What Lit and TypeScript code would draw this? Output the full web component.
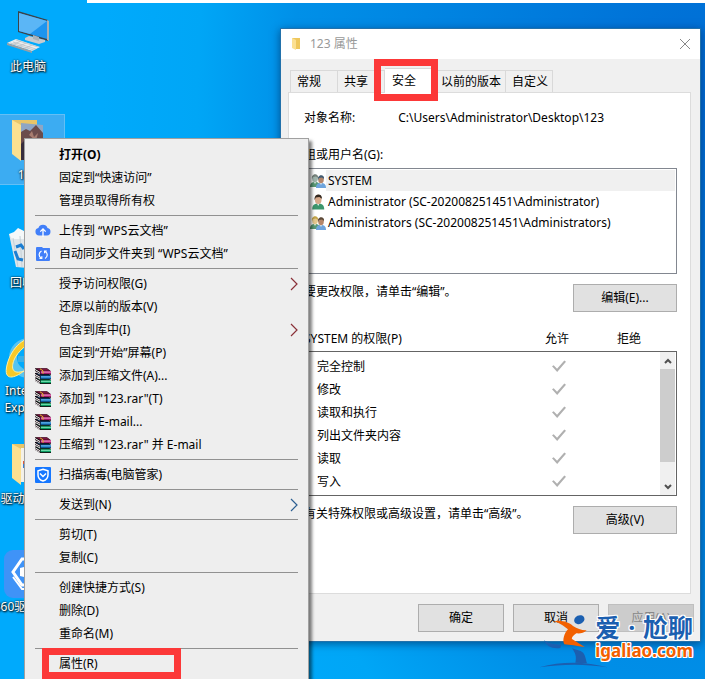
import { LitElement, html, svg, css, nothing, TemplateResult } from "lit";
import { customElement } from "lit/decorators.js";
import { classMap } from "lit/directives/class-map.js";

const pcIcon = html`<svg viewBox="0 0 48 48" width="48" height="48" aria-hidden="true">
  <path d="M14 1l30 9v21L14 22z" fill="#3c4348"/><path d="M43 10l2 1v20l-2-1z" fill="#a9b0b5"/>
  <path d="M15 3l28 8v18L15 21z" fill="#1e95ef"/><path d="M15 3l28 8L26 24l-11-3z" fill="#5bb6f6"/>
  <path d="M21 28l4-2 16 4v2l-6 2-14-4z" fill="#c6cbd0"/><path d="M29 25l6 2v4l-6-2z" fill="#aab2b9"/>
  <path d="M3 33l9-4 24 8-8 4z" fill="#e9ecee"/><path d="M3 33l25 8v2L3 35z" fill="#989fa5"/>
  <path d="M6 33l24 7M9 32l23 7M12 30l22 7M8 35l9-4M14 37l8-4M20 39l8-4" stroke="#b4babf" stroke-width=".7" fill="none"/>
</svg>`;

const folderIcon = (photo: boolean) => html`<svg viewBox="0 0 48 48" width="48" height="48" aria-hidden="true">
  <path d="M8 2h25v32l-16 4z" fill="#e9c568"/>
  ${photo
    ? svg`<path d="M17 5l22 2v35H17z" fill="#8fa6c4"/><path d="M17 14l5-3 4 2 6-6 7 8v27H17z" fill="#6b4c4c"/><path d="M17 26l6-6 5 4 4-5 7 7v16H17z" fill="#372d3d"/><path d="M25 17l3-4 2 6 4-4-2 8z" fill="#a87d70"/>`
    : svg`<path d="M17 6h20v34H17z" fill="#f4f1e9"/><path d="M19 20h12v6H19z" fill="#3a7fd0"/><path d="M19 19h5v3h-5z" fill="#dc5a3b"/>`}
  <path d="M8 2l9 5v36l-9-7z" fill="#fbe090"/>
</svg>`;

const binIcon = html`<svg viewBox="0 0 48 48" width="48" height="48" aria-hidden="true">
  <path d="M5 8h37l-6 35-24-2z" fill="#dfe6ea"/><path d="M5 8l5-2 4-4 6 3 7-2 8 1 7 5-5 4H8z" fill="#f5f8f9"/>
  <path d="M9 12l5 29M16 10l2 31" stroke="#c4d0d7" fill="none"/>
  <path d="M12 21l5-2 3 4M11 25l3 8 5 1M23 20l7-2 4 7M23 35h8l3-6" stroke="#1c7ed2" stroke-width="3" fill="none"/>
</svg>`;

const ieIcon = html`<svg viewBox="0 0 48 48" width="48" height="48" aria-hidden="true">
  <circle cx="25" cy="24" r="16" fill="none" stroke="#55c4f1" stroke-width="8"/><path d="M14 22h27v6H14z" fill="#35b1ea"/>
  <path d="M37 4C21 0 7 14 3 31s8 13 17 6C8 41 7 34 10 26S25 7 37 4z" fill="#f7c928" stroke="#fff0a0" stroke-width="1"/>
</svg>`;

const driverIcon = html`<svg viewBox="0 0 48 48" width="48" height="48" aria-hidden="true">
  <rect width="48" height="48" rx="9" fill="#3f93f7"/>
  <path d="M18 9h12l9 13-9 13H18L9 22z" fill="none" stroke="#fff" stroke-width="3"/>
  <path d="M9 27l9 12h12" fill="none" stroke="#fff" stroke-width="2"/>
  <path d="M24 13l4 4 4 1v8l-4 1-4 4-4-4-4-1v-8l4-1z" fill="#fff"/><circle cx="24" cy="22" r="3" fill="#3f93f7"/>
</svg>`;

const cloudIcon = html`<svg viewBox="0 0 16 16" width="16" height="16" aria-hidden="true">
  <path d="M4 12.500a3.800 3.800 0 01-.6-7.500A4.800 4.800 0 0112.500 5 3.800 3.800 0 0112 12.500z" fill="#417ff9"/>
  <path d="M8 14V6M5.300 8.600L8 5.900l2.700 2.700" fill="none" stroke="#fff" stroke-width="1.300"/>
</svg>`;

const syncIcon = html`<svg viewBox="0 0 16 16" width="16" height="16" aria-hidden="true">
  <path d="M2 1h5l1 1h6.500a1 1 0 01.5 1v11a1 1 0 01-1 1H2a1 1 0 01-1-1V2a1 1 0 011-1z" fill="#417ff9"/>
  <path d="M6.500 5a4 4 0 00-.5 7M10 12.500a4 4 0 00.3-7M4.500 12.500h2.300v-2.300M11.800 5H9.600v2.300" fill="none" stroke="#fff" stroke-width="1.200"/>
</svg>`;

const book = (y: number, top: string, cover: string, light: string) => svg`<g transform="translate(0 ${y})">
  <path d="M0 0h12l4 3v3.500H5L0 3.500z" fill="#14060c"/><path d="M1 .4h10.800l3.200 2.200H5z" fill="${top}"/>
  <path d="M5.500 2.800H16v3H5.500z" fill="${cover}"/><path d="M6 3.900h10" stroke="${light}" stroke-width="1"/>
  <path d="M0 .9l5 2.900v1L0 1.900zM0 2.700l5 2.900v.8L0 3.500z" fill="#fff"/>
</g>`;
const rarIcon = html`<svg viewBox="0 0 16 16" width="16" height="16" aria-hidden="true">
  ${book(9.400, "#055a3a", "#0a9a60", "#7fe8b8")}${book(5, "#06406f", "#0a6ab4", "#7cc8f8")}${book(0.200, "#7d1740", "#a01868", "#f6a0d0")}
  <path d="M5 .8l3 2v3" fill="none" stroke="#e0b428" stroke-width="1"/>
</svg>`;

const shieldIcon = html`<svg viewBox="0 0 16 16" width="16" height="16" aria-hidden="true">
  <rect width="16" height="16" rx="1" fill="#1677ff"/>
  <path d="M8 2.200l5 1.500v4C13 11 11 13 8 14 5 13 3 11 3 7.700v-4z" fill="none" stroke="#fff" stroke-width="1.500"/>
  <path d="M5 6.500l3 3 3-3" fill="none" stroke="#fff" stroke-width="1.500"/>
</svg>`;

const person = (x: number, y: number, skin: string, hair: string, coat: string) => svg`<g transform="translate(${x} ${y})">
  <path d="M0 13c0-4 2-5 5-5s5 1 5 5z" fill="${coat}"/><path d="M4 8l1 2 1-2z" fill="#eef4f4"/>
  <ellipse cx="5" cy="4.500" rx="2.800" ry="3.800" fill="${skin}"/><path d="M2 5c-1-6 7-6 6-1L6 2.500 3 3z" fill="${hair}"/>
</g>`;
const userIcon = html`<svg viewBox="0 0 16 16" width="16" height="16" aria-hidden="true">
  <g transform="translate(1 0) scale(1.200)">${person(1, 0, "#d7a98b", "#33281f", "#3c966d")}</g></svg>`;
const groupIcon = (hair: string, skin: string, back: string) => html`<svg viewBox="0 0 16 16" width="16" height="16" aria-hidden="true">
  ${person(0, 1, skin, hair, "#5a9a76")}${person(6, 2, "#b4866a", back, "#6ea4dc")}</svg>`;

const chevron = html`<svg viewBox="0 0 8 14" width="8" height="14" aria-hidden="true">
  <path d="M1 1l6 6-6 6" fill="none" stroke="currentColor" stroke-width="1.200"/></svg>`;

interface Entry { text: string; icon?: TemplateResult; sub?: "red" | "blue"; bold?: boolean; marked?: boolean }

const menuGroups: Entry[][] = [
  [{ text: "打开(O)", bold: true }, { text: "固定到“快速访问”" }, { text: "管理员取得所有权" }],
  [{ text: "上传到 “WPS云文档”", icon: cloudIcon }, { text: "自动同步文件夹到 “WPS云文档”", icon: syncIcon }],
  [
    { text: "授予访问权限(G)", sub: "red" }, { text: "还原以前的版本(V)" }, { text: "包含到库中(I)", sub: "red" },
    { text: "固定到“开始”屏幕(P)" }, { text: "添加到压缩文件(A)...", icon: rarIcon },
    { text: '添加到 "123.rar"(T)', icon: rarIcon }, { text: "压缩并 E-mail...", icon: rarIcon },
    { text: '压缩到 "123.rar" 并 E-mail', icon: rarIcon },
  ],
  [{ text: "扫描病毒(电脑管家)", icon: shieldIcon }],
  [{ text: "发送到(N)", sub: "blue" }],
  [{ text: "剪切(T)" }, { text: "复制(C)" }],
  [{ text: "创建快捷方式(S)" }, { text: "删除(D)" }, { text: "重命名(M)" }],
  [{ text: "属性(R)", marked: true }],
];

@customElement("context-menu")
export class ContextMenu extends LitElement {
  static styles = css`
    :host { display: block; box-sizing: border-box; padding: 4px 10px; border: 1px solid #a0a0a0; background: #eee; box-shadow: 3px 3px 3px rgba(0, 0, 0, .5); }
    ul { list-style: none; margin: 0; padding: 0; }
    .group + .group { border-top: 1px solid #919191; margin-top: 3px; padding-top: 3px; }
    .entry { position: relative; display: grid; grid-template-columns: 16px 1fr 8px; column-gap: 8px; align-items: center; width: 100%; height: 23px; padding: 0; border: 0; background: none; color: #000; font: inherit; line-height: 23px; text-align: left; white-space: nowrap; }
    .entry svg { display: block; }
    .bold { font-weight: 700; }
    .red { color: #8a3038; }
    .blue { color: #2c5f92; }
    .marked::after { content: ""; position: absolute; inset: -4px 117px -4px 7px; border: 7px solid #fc3838; }
  `;
  render() {
    return html`<ul role="menu">${menuGroups.map((g) => html`<li class="group" role="none"><ul role="none">${g.map((e) => html`
      <li role="none"><button role="menuitem" class=${classMap({ entry: true, bold: !!e.bold, marked: !!e.marked })}>
        <span>${e.icon ?? nothing}</span><span>${e.text}</span>${e.sub ? html`<span class=${e.sub}>${chevron}</span>` : nothing}
      </button></li>`)}</ul></li>`)}</ul>`;
  }
}

@customElement("properties-dialog")
export class PropertiesDialog extends LitElement {
  static styles = css`
    :host { display: block; border: 1px solid #2271ab; background: #f0f0f0; box-shadow: 0 2px 8px rgba(0, 20, 60, .5); line-height: 16px; }
    .title { display: flex; align-items: center; gap: 8px; height: 30px; padding: 0 9px; background: #fff; color: #999; }
    .title h1 { flex: 1; margin: 0; font: inherit; }
    .title svg { display: block; }
    .close { padding: 0; border: 0; background: none; color: #888; }
    .tabs { display: flex; align-items: flex-end; height: 24px; margin: 9px 9px 0 9px; }
    .tab { position: relative; box-sizing: border-box; width: 47px; height: 22px; padding: 0 0 0 6px; border: 1px solid #d9d9d9; border-width: 1px 1px 0 0; background: #f0f0f0; color: #000; font: inherit; text-align: left; white-space: nowrap; }
    .tab:first-child { width: 48px; border-left-width: 1px; }
    .tab.wide { width: 71px; }
    .tab.active { width: 50px; height: 25px; margin-bottom: -1px; padding-left: 7px; background: #fff; z-index: 1; }
    .tab.active::after { content: ""; position: absolute; inset: -10px -4px -8px -11px; border: 7px solid #fc3838; }
    .panel { margin: 0 9px 0 7px; padding: 17px 13px 59px 15px; border: 1px solid #dcdcdc; background: #fff; }
    .name { display: flex; gap: 43px; }
    .caption { margin: 21px 0 5px; }
    .users { box-sizing: border-box; height: 106px; margin: 0; padding: 1px; border: 1px solid #828790; list-style: none; }
    .user { display: flex; align-items: center; height: 21px; padding-left: 4px; }
    .user svg { display: block; }
    .user span { flex: 1; padding-left: 2px; line-height: 21px; white-space: nowrap; }
    .user.selected span { background: #f0f0f0; }
    .action { display: flex; justify-content: space-between; align-items: flex-start; margin-top: 10px; }
    .action p { margin: 0; }
    .btn { box-sizing: border-box; width: 86px; height: 28px; padding: 0; border: 1px solid #adadad; background: #e1e1e1; color: #000; font: inherit; }
    .btn.wide { width: 104px; }
    .btn:disabled { background: #ccc; border-color: #bfbfbf; color: #888; }
    .rights { position: relative; margin-top: 19px; }
    table, thead { display: block; }
    tr { display: grid; grid-template-columns: 1fr 72px 72px; }
    th, td { padding: 0; font-weight: 400; text-align: center; }
    th:first-child, td:first-child { text-align: left; }
    thead tr { padding-right: 12px; }
    tbody { box-sizing: border-box; display: block; height: 145px; margin-top: 4px; padding: 3px 12px 0; border: 1px solid #646464; }
    tbody tr { height: 23px; line-height: 23px; }
    .check { appearance: none; display: block; width: 14px; height: 12px; margin: 5px 0 0 32px; background: #b0b0b0; clip-path: polygon(0 52%, 12% 44%, 36% 72%, 88% 4%, 100% 14%, 37% 100%); }
    .scroll { position: absolute; right: 2px; bottom: 1px; display: flex; flex-direction: column; width: 15px; height: 143px; background: #f0f0f0; }
    .scroll button { display: grid; place-items: center; height: 17px; padding: 0; border: 0; background: none; color: #505050; }
    .thumb { height: 93px; background: #cdcdcd; }
    .scroll .down { margin-top: auto; }
    footer { display: flex; justify-content: flex-end; gap: 9px; padding: 10px 6px 9px; }
  `;
  render() {
    const users = [
      { name: "SYSTEM", icon: groupIcon("#77827c", "#a0b5ac", "#415c73") },
      { name: "Administrator (SC-202008251451\\Administrator)", icon: userIcon },
      { name: "Administrators (SC-202008251451\\Administrators)", icon: groupIcon("#c3a549", "#e5c88d", "#5b4939") },
    ];
    const rights = ["完全控制", "修改", "读取和执行", "列出文件夹内容", "读取", "写入"];
    return html`
      <header class="title">
        <svg viewBox="0 0 12 14" width="12" height="14" aria-hidden="true"><path d="M2 1h8v11H5z" fill="#eec75c"/><path d="M2 1l4 2v10l-4-2z" fill="#fbe092"/></svg>
        <h1>123 属性</h1>
        <button class="close" aria-label="关闭"><svg viewBox="0 0 12 12" width="12" height="12"><path d="M1 1l10 10M11 1L1 11" stroke="currentColor" fill="none"/></svg></button>
      </header>
      <div class="tabs" role="tablist">
        <button role="tab" class="tab">常规</button><button role="tab" class="tab">共享</button>
        <button role="tab" class="tab active" aria-selected="true">安全</button>
        <button role="tab" class="tab wide">以前的版本</button><button role="tab" class="tab">自定义</button>
      </div>
      <section class="panel">
        <div class="name"><span>对象名称:</span><span>C:\\Users\\Administrator\\Desktop\\123</span></div>
        <div class="caption" id="groups">组或用户名(G):</div>
        <ul class="users" aria-labelledby="groups">${users.map((u, i) => html`
          <li class=${classMap({ user: true, selected: i === 0 })}>${u.icon}<span>${u.name}</span></li>`)}</ul>
        <div class="action"><p>要更改权限，请单击“编辑”。</p><button class="btn wide">编辑(E)...</button></div>
        <div class="rights">
          <table>
            <thead><tr><th>SYSTEM 的权限(P)</th><th>允许</th><th>拒绝</th></tr></thead>
            <tbody>
              ${rights.map((r) => html`<tr><td>${r}</td><td><input class="check" type="checkbox" checked disabled aria-label=${"允许 " + r}></td><td></td></tr>`)}
            </tbody>
          </table>
          <div class="scroll">
            <button aria-label="向上"><svg viewBox="0 0 8 6" width="8" height="6"><path d="M1 5l3-3 3 3" fill="none" stroke="currentColor" stroke-width="2"/></svg></button>
            <div class="thumb"></div>
            <button class="down" aria-label="向下"><svg viewBox="0 0 8 6" width="8" height="6"><path d="M1 1l3 3 3-3" fill="none" stroke="currentColor" stroke-width="2"/></svg></button>
          </div>
        </div>
        <div class="action"><p>有关特殊权限或高级设置，请单击“高级”。</p><button class="btn wide">高级(V)</button></div>
      </section>
      <footer><button class="btn">确定</button><button class="btn">取消</button><button class="btn" disabled>应用(A)</button></footer>`;
  }
}

@customElement("app-root")
export class AppRoot extends LitElement {
  static styles = css`
    :host { position: relative; display: block; height: 100vh; overflow: hidden; font: 12px/16px "Noto Sans", "Noto Sans CJK SC", sans-serif; background: radial-gradient(ellipse 90% 140% at 100% 15%, #006cd4 0%, #007adc 25%, #0090e8 65%, #00a6f6 80%, #00aafc 95%); }
    .strip { height: 3px; margin-left: 87px; background: #fff; }
    .icons { position: absolute; left: -9px; top: 6px; display: grid; grid-auto-rows: 108px; width: 74px; margin: 0; padding: 0; list-style: none; }
    .shortcut { box-sizing: border-box; display: flex; flex-direction: column; align-items: center; width: 100%; min-height: 71px; padding: 3px 0 0; border: 1px solid transparent; background: none; color: #fff; font: inherit; line-height: 17px; text-align: center; text-shadow: 1px 1px 2px #000, 0 0 2px #000; }
    .shortcut.selected { border-color: #63bff5; background: #3cacf2; }
    .shortcut svg { display: block; }
    .label { white-space: pre; }
    .dialog { position: absolute; left: 280px; right: 4px; top: 28px; }
    .menu { position: absolute; left: 24px; top: 138px; width: 285px; }
    .mark { position: absolute; right: 12px; bottom: 10px; display: flex; align-items: flex-end; }
    .figure { margin-right: -14px; }
    .brand { display: flex; flex-direction: column; margin-bottom: 6px; font-weight: 700; white-space: nowrap; text-shadow: 1px 0 #fff, -1px 0 #fff, 0 1px #fff, 0 -1px #fff, 1px 1px #fff, -1px -1px #fff, 1px -1px #fff, -1px 1px #fff; }
    .zh { display: flex; justify-content: space-between; color: #1b5fb0; font-size: 25px; line-height: 24px; }
    .url { color: #f26000; font-size: 17px; line-height: 24px; }
  `;
  render() {
    const icons = [
      { label: "此电脑", icon: pcIcon },
      { label: "123", icon: folderIcon(true), selected: true },
      { label: "回收站", icon: binIcon },
      { label: "Internet\nExplorer", icon: ieIcon },
      { label: "驱动人生8", icon: folderIcon(false) },
      { label: "360驱动大师", icon: driverIcon },
    ];
    return html`
      <div class="strip"></div>
      <ul class="icons">${icons.map((i) => html`<li><button class=${classMap({ shortcut: true, selected: !!i.selected })}>${i.icon}<span class="label">${i.label}</span></button></li>`)}</ul>
      <properties-dialog class="dialog" role="dialog" aria-label="123 属性"></properties-dialog>
      <context-menu class="menu"></context-menu>
      <div class="mark">
        <svg class="figure" viewBox="420 98 213 168" width="71" height="56" aria-hidden="true">
          <ellipse cx="544" cy="118" rx="16" ry="13" transform="rotate(-25 544 118)" fill="#1b5fb0"/>
          <path d="M465 123c25-5 47 2 60 14 13 8 27 14 41 13-8 9-22 10-31 9-8 6-15 13-13 17l38 24c-24-3-44-7-61-8-7-12 0-34 11-45-14-10-25-20-45-24z" fill="#f26000"/>
          <path d="M438 180c13 9 28 13 52 13l-3 10c-24 4-41-5-49-23z" fill="#1b5fb0"/>
          <path d="M522 204l26 8c14 6 14 22 19 37l-35-2c5-18-1-30-10-43z" fill="#1b5fb0"/>
          <path d="M424 261c70-20 142-17 205 0-70-11-137-10-205 0z" fill="#1b5fb0"/>
        </svg>
        <div class="brand"><span class="zh"><span>爱</span><span>·</span><span>尬聊</span></span><span class="url">igaliao.com</span></div>
      </div>`;
  }
}
